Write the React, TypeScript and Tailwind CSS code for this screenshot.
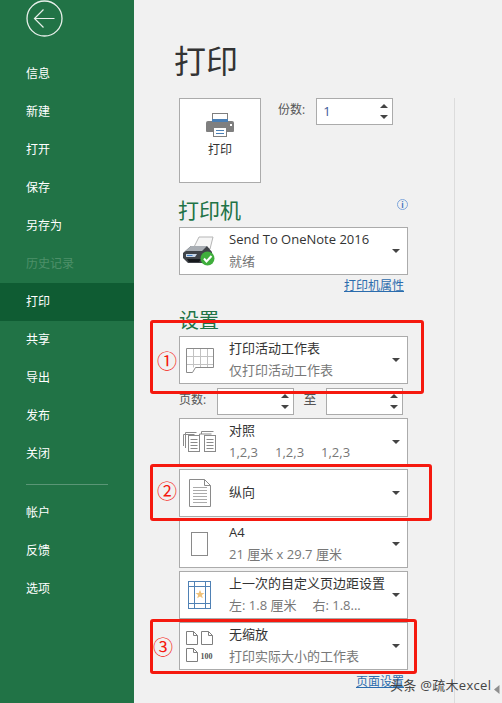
import { ReactNode } from "react";

const navTop = ["信息", "新建", "打开", "保存", "另存为", "历史记录", "打印", "共享", "导出", "发布", "关闭"];
const navBottom = ["帐户", "反馈", "选项"];

const Caret = () => (
  <span className="h-0 w-0 border-x-[4px] border-t-[4px] border-x-transparent border-t-[#444]" />
);

const Spin = () => (
  <span className="flex flex-col gap-[7px]">
    <span className="h-0 w-0 border-x-[4px] border-b-[4px] border-x-transparent border-b-[#444]" />
    <span className="h-0 w-0 border-x-[4px] border-t-[4px] border-x-transparent border-t-[#444]" />
  </span>
);

const Spinner = ({ value, className }: { value?: string; className: string }) => (
  <div className={`flex items-center justify-between border border-[#ababab] bg-white pl-[6px] pr-[4px] ${className}`}>
    <span className="text-[13px] text-[#3d5a98]">{value}</span>
    <Spin />
  </div>
);

const Select = ({
  icon,
  title,
  sub,
  className = "",
}: {
  icon: ReactNode;
  title: string;
  sub?: ReactNode;
  className?: string;
}) => (
  <div className={`flex h-[48px] w-[229px] items-center border border-[#ababab] bg-white ${className}`}>
    <div className="flex w-[49px] shrink-0 justify-center pr-[10px]">{icon}</div>
    <div className="min-w-0 flex-1 pb-[2px] text-[13px] leading-[22px]">
      <div className="whitespace-nowrap text-[#333]">{title}</div>
      {sub && <div className="whitespace-nowrap text-[#777]">{sub}</div>}
    </div>
    <div className="flex w-[22px] shrink-0 justify-center">
      <Caret />
    </div>
  </div>
);

const PrinterBig = () => (
  <svg width="30" height="26" viewBox="0 0 30 26">
    <rect x="7.500" y="1.500" width="15" height="9" fill="#fff" stroke="#7f7f7f" />
    <path d="M1 11a2 2 0 0 1 2-2h24a2 2 0 0 1 2 2v8a1 1 0 0 1-1 1H2a1 1 0 0 1-1-1z" fill="#7f7f7f" />
    <rect x="7" y="7" width="16" height="3" fill="#4a7fb5" />
    <rect x="25" y="12" width="2" height="2" fill="#fff" />
    <rect x="8.500" y="15.500" width="13" height="9" fill="#fff" stroke="#7f7f7f" />
    <path d="M11 18.500h8M11 21.500h8" stroke="#4a7fb5" />
  </svg>
);

const PrinterDevice = () => (
  <svg width="33" height="30" viewBox="0 0 33 30">
    <path d="M11 11 16 1h14l-3 12z" fill="#f6f6f6" stroke="#b5b5b5" />
    <path d="M0 17 8 10h16l5 6v6l-8 5H5l-5-5z" fill="#3f4348" />
    <path d="M1 16 8 10h16l-5 5H3z" fill="#a8adb3" />
    <path d="M3 18h11l-2 3H3z" fill="#c9d6e6" />
    <path d="M4 19h6l-1 1H4z" fill="#3f7fc4" />
    <path d="M4 23h14l-2 3H6z" fill="#16191c" />
    <circle cx="24.500" cy="22.500" r="7" fill="#3fae3c" />
    <path d="m21 22.500 2.500 3 5-5.500" fill="none" stroke="#fff" strokeWidth="2" />
  </svg>
);

const SheetIcon = () => (
  <svg width="28" height="25" viewBox="0 0 28 25" fill="none">
    <path d="M.5 8.500h27M.5 16.500h27M7.500.500v19M14.500.500v19M21.500.500v19" stroke="#c2c2c2" />
    <path d="M.5 24.500V.500h27v19h-18l-3 5H.5" stroke="#8a8a8a" />
  </svg>
);

const CollateIcon = () => (
  <svg width="33" height="22" viewBox="0 0 33 22" fill="none" stroke="#8a8a8a">
    <path d="M.5 15V3.500h11M2.500 17V1.500h11M18.500 3V.500h12" />
    <path d="M16.500 15V3h12" />
    <rect x="5.500" y="4.500" width="11" height="16" fill="#fff" />
    <rect x="21.500" y="4.500" width="11" height="16" fill="#fff" />
    <path d="M7.500 8.500h7M7.500 11.500h7M7.500 14.500h7M7.500 17.500h7M23.500 8.500h7M23.500 11.500h7M23.500 14.500h7M23.500 17.500h7" />
  </svg>
);

const PortraitIcon = () => (
  <svg width="22" height="28" viewBox="0 0 22 28" fill="none" stroke="#8a8a8a">
    <path d="M.5.500h15l6 6v21H.5zM15.500.500v6h6" />
    <path d="M4 8.500h14M4 11.500h14M4 14.500h14M4 17.500h14M4 20.500h14M4 23.500h14" stroke="#aaa" />
  </svg>
);

const PaperIcon = () => (
  <svg width="17" height="24" viewBox="0 0 17 24" fill="none">
    <rect x=".5" y=".5" width="16" height="23" stroke="#8a8a8a" />
  </svg>
);

const MarginIcon = () => (
  <svg width="23" height="28" viewBox="0 0 23 28" fill="none">
    <rect x=".5" y=".5" width="22" height="27" stroke="#4f81b5" />
    <path d="M6.500 0v28M17.500 0v28M0 5.500h23M0 22.500h23" stroke="#4f81b5" />
    <path d="m12 9 1.300 3h3.200l-2.600 2.100.9 3.200-2.800-1.800-2.800 1.800.9-3.200L7.500 12h3.200z" fill="#efc27a" />
  </svg>
);

const ScaleIcon = () => (
  <div className="relative h-[31px] w-[28px]">
    <svg width="28" height="31" viewBox="0 0 28 31" fill="none" stroke="#7f7f7f">
      <path d="M.5.500h7l4 4v9H.5zM7.500.500v4h4M15.500.500h7l4 4v9h-11zM22.500.500v4h4M.5 17.500h7l4 4v9H.5zM7.500 17.500v4h4" />
    </svg>
    <span className="absolute left-[15px] top-[21px] font-['Liberation_Serif',serif] text-[8px] leading-[10px] font-bold text-[#555]">
      100
    </span>
  </div>
);

const Mark = ({ n, className, numClass }: { n: string; className: string; numClass: string }) => (
  <div className={`absolute rounded-[3px] border-[3px] border-[#f5190f] ${className}`}>
    <span className={`absolute h-[20px] text-[20px] leading-[20px] text-[#f5190f] ${numClass}`}>{n}</span>
  </div>
);

export default function App() {
  return (
    <div className="relative flex h-[703px] w-[502px] overflow-hidden bg-[#f1f1f1] font-['Open_Sans','Noto_Sans_CJK_SC',sans-serif]">
      <aside className="w-[134px] shrink-0 bg-[#217346] text-[12px] text-white">
        <svg width="38" height="38" viewBox="0 0 38 38" fill="none" stroke="#e8f0eb" className="ml-[26px]">
          <circle cx="18.500" cy="18.500" r="17.500" strokeWidth="1.300" />
          <path d="M8.500 18.500h20M17.500 9.500l-9 9 9 9" strokeWidth="1.200" />
        </svg>
        <nav className="mt-[17px]">
          {navTop.map((item) => (
            <div
              key={item}
              className={`flex h-[38px] items-center pb-[1px] pl-[26px] ${item === "打印" ? "bg-[#0f5c33]" : ""} ${
                item === "历史记录" ? "text-[#4d9069]" : ""
              }`}
            >
              {item}
            </div>
          ))}
        </nav>
        <div className="mx-[26px] mt-[11px] mb-[9px] h-px w-[82px] bg-[#5a9676]" />
        {navBottom.map((item) => (
          <div key={item} className="flex h-[38px] items-center pb-[1px] pl-[26px]">
            {item}
          </div>
        ))}
      </aside>

      <main className="relative flex-1 pl-[45px]">
        <h1 className="ml-[-5px] mt-[38px] text-[32px] leading-[46px] text-[#333]">打印</h1>

        <div className="mt-[14px] flex items-start">
          <div className="flex h-[85px] w-[82px] flex-col items-center border border-[#ababab] bg-white pt-[13px] text-[12px] text-[#333]">
            <PrinterBig />
            <span className="mt-[3px]">打印</span>
          </div>
          <span className="ml-[17px] mt-[3px] text-[12px] leading-[18px] text-[#555]">份数:</span>
          <Spinner value="1" className="ml-[11px] h-[27px] w-[77px]" />
        </div>

        <div className="mt-[13px] flex h-[31px] w-[229px] items-start justify-between">
          <h2 className="ml-[-1px] text-[21px] leading-[28px] text-[#217346]">打印机</h2>
          <span className="mt-[3px] flex h-[11px] w-[11px] items-center justify-center rounded-full border border-[#7ea6dc] text-[8px] leading-none font-bold text-[#3f74c0]">
            i
          </span>
        </div>
        <Select icon={<PrinterDevice />} title="Send To OneNote 2016" sub="就绪" />
        <div className="mt-[2px] w-[225px] text-right text-[12px] leading-[18px] text-[#2b6cad] underline">打印机属性</div>

        <h2 className="mt-[12px] h-[27px] text-[20px] leading-[28px] text-[#217346]">设置</h2>
        <Select className="mt-[2px]" icon={<SheetIcon />} title="打印活动工作表" sub="仅打印活动工作表" />

        <div className="mt-[4px] flex h-[27px] w-[224px] items-center">
          <span className="w-[38px] pb-[4px] text-[12px] text-[#555]">页数:</span>
          <Spinner className="h-[27px] w-[77px]" />
          <span className="w-[32px] pb-[4px] text-center text-[13px] text-[#555]">至</span>
          <Spinner className="h-[27px] w-[77px]" />
        </div>

        <Select
          className="mt-[3px]"
          icon={<CollateIcon />}
          title="对照"
          sub={
            <span className="flex gap-[17px]">
              <span>1,2,3</span>
              <span>1,2,3</span>
              <span>1,2,3</span>
            </span>
          }
        />
        <Select className="mt-[3px]" icon={<PortraitIcon />} title="纵向" />
        <Select className="mt-[3px]" icon={<PaperIcon />} title="A4" sub="21 厘米 x 29.7 厘米" />
        <Select
          className="mt-[3px]"
          icon={<MarginIcon />}
          title="上一次的自定义页边距设置"
          sub={
            <span className="flex gap-[16px]">
              <span>左:  1.8 厘米</span>
              <span>右:  1.8...</span>
            </span>
          }
        />
        <Select className="mt-[3px]" icon={<ScaleIcon />} title="无缩放" sub="打印实际大小的工作表" />
        <div className="mt-[3px] w-[225px] text-right text-[12px] leading-[18px] text-[#2b6cad] underline">页面设置</div>

        <div className="absolute bottom-0 left-[320px] top-[98px] w-px bg-[#dcdcdc]" />
        <svg width="6" height="9" viewBox="0 0 6 9" className="absolute bottom-[9px] right-[2px]">
          <path d="M5.500 0v9L0 4.500z" fill="#8f8f8f" />
        </svg>
      </main>

      <Mark n="①" className="left-[150px] top-[320px] h-[74px] w-[274px]" numClass="left-[4px] top-[29px]" />
      <Mark n="②" className="left-[150px] top-[464px] h-[57px] w-[282px]" numClass="left-[4px] top-[15px]" />
      <Mark n="③" className="left-[150px] top-[619px] h-[55px] w-[267px]" numClass="left-[0px] top-[16px]" />
      <div className="absolute bottom-[9px] left-[390px] text-[13px] leading-[18px] tracking-[0.3px] text-[#444]">
        头条 @疏木excel
      </div>
    </div>
  );
}
